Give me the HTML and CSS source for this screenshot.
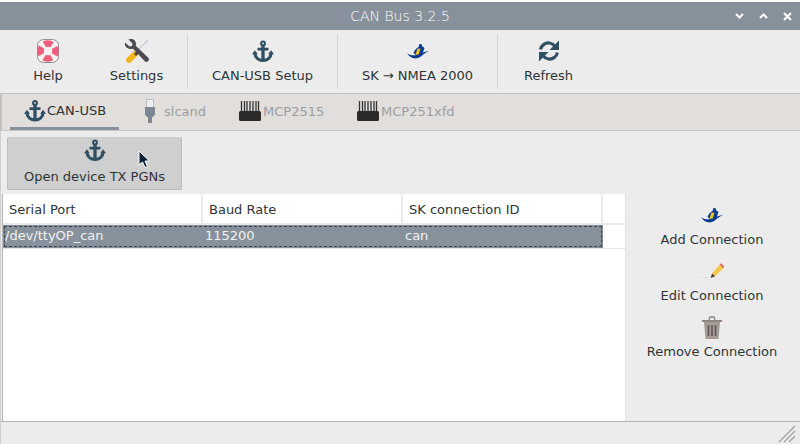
FILE: index.html
```html
<!DOCTYPE html>
<html lang="en">

<head>
    <meta charset="UTF-8">
    <title>CAN Bus 3.2.5</title>
    <link rel="stylesheet" href="styles.css">
</head>

<body>
    <svg class="defs" width="0" height="0">
        <defs>
            <symbol id="anchor" viewBox="0 0 24 24">
                <circle cx="12" cy="3.200" r="2.100" fill="none" stroke="#2f4f63" stroke-width="2.200" />
                <path d="M10.200 5.500h3.600v16h-3.600zM6 8h12v3H6z" fill="#2f4f63" />
                <path d="M3 13.500C3.500 19 7.500 21.800 12 21.800S20.500 19 21 13.500" fill="none" stroke="#2f4f63" stroke-width="3.400" />
                <path d="M0 15l3.200-4.500L6.400 15zM17.600 15l3.200-4.500 3.200 4.500z" fill="#2f4f63" />
            </symbol>
            <symbol id="boat" viewBox="0 0 22 16">
                <path d="M6.500 10C7.500 7 9.500 5 11.500 4L12.500 1h2l.5 2 2.500 2-2 6-5.500 2z" fill="#0a3d91" />
                <path d="M10.500 5.500l3 .3-2 6.200-3-.3z" fill="#f5c518" />
                <path d="M0 10c3 3 9 3 14 .5 3-1.500 6-2.500 8-2.500-3 1-5 3-7.500 5C10 17 3 16 0 10z" fill="#0a3d91" />
            </symbol>
            <symbol id="chip" viewBox="0 0 24 24">
                <path d="M3.500 2v11M6.500 2v11M9 2v11M12 2v11M15 2v11M18 2v11M20.500 2v11" stroke="#333" stroke-width="1.300" fill="none" />
                <rect x="1" y="12" width="22" height="10" rx="1.500" fill="#2b2b2b" />
            </symbol>
        </defs>
    </svg>

    <div class="window">
        <header class="titlebar">
            <span class="title">CAN Bus 3.2.5</span>
            <div class="win-btns">
                <svg width="9" height="6" viewBox="0 0 9 6"><path d="M1 1l3.500 3.500L8 1" fill="none" stroke="#fff" stroke-width="2" /></svg>
                <svg width="9" height="6" viewBox="0 0 9 6"><path d="M1 5l3.500-3.500L8 5" fill="none" stroke="#fff" stroke-width="2" /></svg>
                <svg width="9" height="9" viewBox="0 0 9 9"><path d="M1 1l7 7M8 1l-7 7" fill="none" stroke="#fff" stroke-width="2" /></svg>
            </div>
        </header>

        <nav class="toolbar">
            <a class="tool tool-help">
                <div class="tool-icon">
                    <svg width="24" height="26" viewBox="0 0 24 26">
                        <rect x="1.500" y="1.500" width="21" height="23" rx="6" fill="#f7f3f3" stroke="#8d8d93" stroke-width="1" />
                        <circle cx="12" cy="13" r="7.500" fill="none" stroke="#f0607c" stroke-width="6.500" stroke-dasharray="8 3.780" stroke-dashoffset="4" />
                    </svg>
                </div>
                <span>Help</span>
            </a>
            <a class="tool tool-settings">
                <div class="tool-icon">
                    <svg width="26" height="26" viewBox="0 0 26 26">
                        <path d="M24 2L13 13" stroke="#c9cdd2" stroke-width="1.500" />
                        <path d="M11 16l-6 6" stroke="#f5b51e" stroke-width="6" stroke-linecap="round" />
                        <path d="M14 14l-3 3" stroke="#444" stroke-width="3" />
                        <path d="M1 4.500L5.500 8.500l2.500-.5.500-2.500L4.500 1.500c3.500-1.500 7.500.5 7.500 4.500 0 .8-.1 1.200-.3 1.700L24.500 20c1.500 2-1 5-3.500 3.500L9 10.800C4.500 12 0 9 1 4.500z" fill="#4a4a50" />
                    </svg>
                </div>
                <span>Settings</span>
            </a>
            <div class="sep"></div>
            <a class="tool tool-setup">
                <div class="tool-icon"><svg width="22" height="23"><use href="#anchor" /></svg></div>
                <span>CAN-USB Setup</span>
            </a>
            <div class="sep"></div>
            <a class="tool tool-sk">
                <div class="tool-icon"><svg width="22" height="16"><use href="#boat" /></svg></div>
                <span>SK → NMEA 2000</span>
            </a>
            <div class="sep"></div>
            <a class="tool tool-refresh">
                <div class="tool-icon">
                    <svg width="24" height="24" viewBox="0 0 24 24">
                        <path d="M3.500 10.500C4.500 6 8.500 3.500 12.500 4c2.200.3 4 1.500 5.200 3.200" fill="none" stroke="#2f4f63" stroke-width="3.200" />
                        <path d="M22 1.500V11H12.500z" fill="#2f4f63" />
                        <path d="M20.500 13.500C19.500 18 15.500 20.500 11.500 20c-2.200-.3-4-1.500-5.200-3.200" fill="none" stroke="#2f4f63" stroke-width="3.200" />
                        <path d="M2 22.500V13h9.500z" fill="#2f4f63" />
                    </svg>
                </div>
                <span>Refresh</span>
            </a>
        </nav>

        <div class="tabs">
            <a class="tab tab-active">
                <svg width="22" height="22"><use href="#anchor" /></svg>
                <span>CAN-USB</span>
            </a>
            <a class="tab tab-slcand">
                <svg width="12" height="24" viewBox="0 0 12 24">
                    <path d="M2.500 .5h7v8h-7z" fill="#eceef1" stroke="#b9bfc7" stroke-width="1" />
                    <path d="M1 8h10v8l-3 2.500V24H4v-5.500L1 16z" fill="#7d8794" />
                </svg>
                <span>slcand</span>
            </a>
            <a class="tab tab-mcp">
                <svg width="24" height="24"><use href="#chip" /></svg>
                <span>MCP2515</span>
            </a>
            <a class="tab tab-mcp2">
                <svg width="24" height="24"><use href="#chip" /></svg>
                <span>MCP251xfd</span>
            </a>
        </div>

        <main class="panel">
            <div class="panel-top">
                <a class="open-btn">
                    <svg width="22" height="23"><use href="#anchor" /></svg>
                    <span>Open device TX PGNs</span>
                </a>
            </div>
            <div class="panel-body">
                <div class="table">
                    <div class="row head">
                        <div class="cell">Serial Port</div>
                        <div class="cell">Baud Rate</div>
                        <div class="cell">SK connection ID</div>
                        <div class="cell"></div>
                    </div>
                    <div class="row-wrap">
                        <div class="row selected">
                            <div class="cell">/dev/ttyOP_can</div>
                            <div class="cell">115200</div>
                            <div class="cell">can</div>
                        </div>
                    </div>
                </div>
                <aside class="side">
                    <a class="side-btn">
                        <svg class="icon-raised" width="22" height="16"><use href="#boat" /></svg>
                        <span>Add Connection</span>
                    </a>
                    <a class="side-btn">
                        <svg class="icon-raised" width="25" height="18" viewBox="0 0 26 20">
                            <path d="M1 18.500h9" stroke="#f3a0a0" stroke-width="1" stroke-dasharray="1 2" />
                            <path d="M11 19l1.500-5L21 4l4 4-9 9z" fill="#f7c948" />
                            <path d="M11 19l1.500-5 3.500 3z" fill="#444" />
                            <path d="M21 4l1.500-1.500 3.500 3.500L25 8z" fill="#e85a5a" />
                        </svg>
                        <span>Edit Connection</span>
                    </a>
                    <a class="side-btn">
                        <svg width="22" height="25" viewBox="0 0 22 25">
                            <path d="M1 5h20v2H1z" fill="#8f8582" />
                            <path d="M8 5l1-3h4l1 3" fill="none" stroke="#8f8582" stroke-width="1.300" />
                            <path d="M3 7h16l-1.500 17h-13z" fill="#a59c98" />
                            <path d="M7.500 10v11M11 10v11M14.500 10v11" stroke="#5f5855" stroke-width="1.600" />
                        </svg>
                        <span>Remove Connection</span>
                    </a>
                </aside>
            </div>
        </main>

        <footer class="statusbar">
            <svg width="18" height="18" viewBox="0 0 18 18">
                <path d="M17 1L1 17M17 6L6 17M17 11L11 17" stroke="#a0a0a0" stroke-width="1.300" />
            </svg>
        </footer>
    </div>

    <svg class="cursor" width="13" height="19" viewBox="0 0 13 19">
        <path d="M1 1v14l3.500-3 2.500 5.500 2.500-1-2.500-5.500h4.500z" fill="#10203a" stroke="#fff" stroke-width="1" />
    </svg>
</body>

</html>
```

FILE: styles.css
```css
* {
    padding: 0;
    margin: 0;
    box-sizing: border-box;
    font-family: "DejaVu Sans", Verdana, sans-serif;
}

html,
body {
    width: 800px;
    height: 444px;
    overflow: hidden;
    background-color: #ececec;
}

.defs {
    display: block;
    height: 0;
}

.window {
    height: 444px;
    display: flex;
    flex-direction: column;
    padding-top: 2px;
    background-color: #fff;
    color: #2e3436;
    font-size: 13px;
}

.titlebar {
    height: 28px;
    flex: none;
    display: flex;
    align-items: center;
    justify-content: center;
    position: relative;
    background-color: #87919b;
    color: #fff;
    font-size: 14px;
}

.title {
    font-weight: 200;
}

.win-btns {
    position: absolute;
    right: 8px;
    top: 0;
    height: 28px;
    display: flex;
    align-items: center;
    gap: 15px;
}

.toolbar {
    height: 64px;
    flex: none;
    display: flex;
    background-color: #ececec;
    border-bottom: 1px solid #c4c2bf;
    padding-top: 4px;
}

.tool {
    display: flex;
    flex-direction: column;
    align-items: center;
    gap: 4px;
    padding-top: 4px;
    line-height: 16px;
    height: 55px;
}

.tool-icon {
    height: 26px;
    display: flex;
    align-items: center;
    justify-content: center;
}

.tool-help {
    width: 96px;
}

.tool-settings {
    width: 91px;
    padding-right: 10px;
}

.tool-setup {
    width: 149px;
}

.tool-sk {
    width: 159px;
}

.tool-refresh {
    width: 101px;
}

.sep {
    width: 1px;
    height: 55px;
    background-color: #d6d6d6;
}

.tabs {
    height: 37px;
    flex: none;
    display: flex;
    padding-left: 10px;
    background-color: #e1dedb;
    border-left: 2px solid #c4c2bf;
    border-bottom: 1px solid #c8c6c2;
    color: #9a9ea3;
}

.tab {
    display: flex;
    align-items: center;
    gap: 1px;
    height: 36px;
    padding-bottom: 2px;
}

.tab-active {
    width: 109px;
    margin-left: -2px;
    padding-left: 14px;
    color: #2e3436;
    border-bottom: 3px solid #87919b;
    padding-bottom: 0;
}

.tab-slcand {
    width: 119px;
    padding-left: 25px;
    gap: 8px;
}

.tab-mcp {
    width: 118px;
}

.tab-mcp2 {
    width: 120px;
}

.panel {
    flex: 1;
    display: flex;
    flex-direction: column;
    min-height: 0;
    background-color: #ececec;
    border-left: 1px solid #cfcfcf;
}

.panel-top {
    height: 63px;
    flex: none;
    padding: 6px 0 0 6px;
}

.open-btn {
    width: 175px;
    height: 53px;
    display: flex;
    flex-direction: column;
    align-items: center;
    justify-content: space-between;
    padding: 2px 0 4px;
    line-height: 16px;
    background-color: #cfcfcf;
    border: 1px solid #bdbdbd;
    border-top: none;
    border-radius: 2px;
}

.panel-body {
    flex: 1;
    display: flex;
    min-height: 0;
    border-bottom: 1px solid #b4b4b4;
    padding-left: 1px;
}

.table {
    width: 624px;
    background-color: #fff;
    border-left: 1px solid #b4b4b4;
    border-right: 1px solid #e4e4e4;
}

.row {
    display: grid;
    grid-template-columns: 200px 200px 200px 1fr;
}

.head {
    height: 31px;
    border-bottom: 2px solid #e8e8e8;
}

.head .cell {
    display: flex;
    align-items: center;
    padding: 2px 0 0 6px;
    border-right: 2px solid #ececec;
}

.head .cell:last-child {
    border-right: none;
}

.row-wrap {
    height: 24px;
    border-bottom: 1px solid #e4e4e4;
}

.selected {
    width: 600px;
    height: 23px;
    align-items: center;
    grid-template-columns: 200px 200px 1fr;
    background-color: #87919b;
    color: #f2f2f2;
    outline: 1px dashed #3a4148;
    outline-offset: -2px;
    padding-bottom: 2px;
}

.selected .cell {
    padding-left: 2px;
}

.side {
    flex: 1;
    display: flex;
    flex-direction: column;
    align-items: center;
    padding: 1px 2px 0 0;
}

.side-btn {
    height: 56px;
    display: flex;
    flex-direction: column;
    align-items: center;
    justify-content: flex-end;
    gap: 4px;
    line-height: 16px;
    padding-bottom: 3px;
}

.icon-raised {
    margin-bottom: 5px;
}

.statusbar {
    height: 22px;
    flex: none;
    display: flex;
    justify-content: flex-end;
    align-items: flex-end;
    background-color: #ececec;
    border-left: 1px solid #cfcfcf;
    padding: 0 4px 1px 0;
}

.cursor {
    position: absolute;
    left: 138px;
    top: 150px;
}
```
